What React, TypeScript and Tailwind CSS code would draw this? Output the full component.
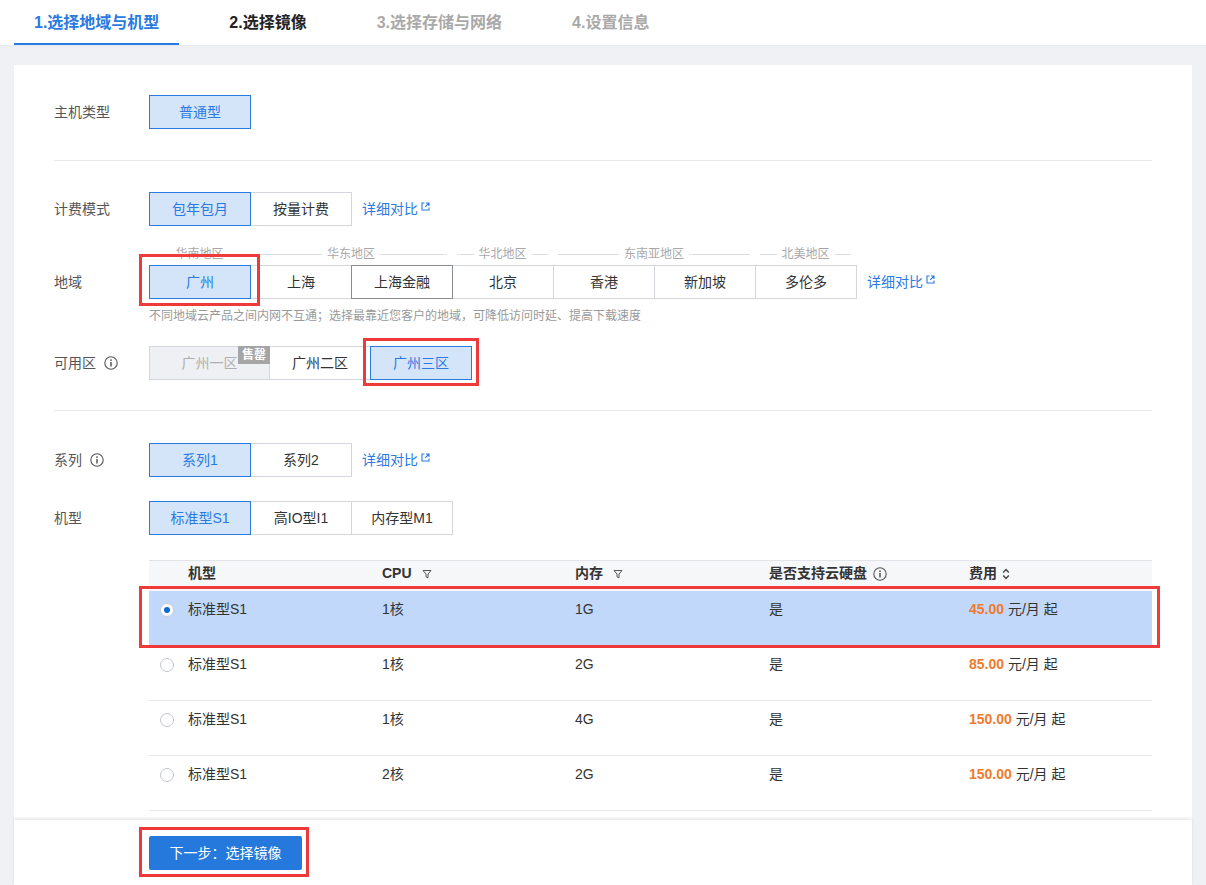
import React from "react";

const BLUE = "#2a7ae2";

function ExtIcon() {
  return (
    <svg width="9" height="9" viewBox="0 0 9 9" className="ml-[3px] -mt-[6px]">
      <path d="M3.5 1H1v7h7V5.5" fill="none" stroke={BLUE} strokeWidth="1.1" />
      <path d="M5 1h3v3M8 1L4.2 4.8" fill="none" stroke={BLUE} strokeWidth="1.1" />
    </svg>
  );
}

function InfoIcon() {
  return (
    <svg width="14" height="14" viewBox="0 0 14 14">
      <circle cx="7" cy="7" r="6.2" fill="none" stroke="#555" strokeWidth="1.1" />
      <circle cx="7" cy="4.1" r="0.95" fill="#555" />
      <path d="M7 6v4.6" stroke="#555" strokeWidth="1.5" />
    </svg>
  );
}

function FilterIcon() {
  return (
    <svg width="10" height="10" viewBox="0 0 10 10" className="ml-[10px]">
      <path d="M1 1.5h8L6 5v3.8L4 7.8V5z" fill="none" stroke="#555" strokeWidth="1" strokeLinejoin="round" />
    </svg>
  );
}

function SortIcon() {
  return (
    <svg width="8" height="12" viewBox="0 0 8 12" className="ml-[5px]">
      <path d="M1.2 4.6L4 1.6L6.8 4.6M1.2 7.4L4 10.4L6.8 7.4" fill="none" stroke="#444" strokeWidth="1.4" />
    </svg>
  );
}

function Link() {
  return (
    <span className="ml-[10px] flex items-center text-[14px] text-[#2a7ae2]">
      详细对比
      <ExtIcon />
    </span>
  );
}

type Opt = { t: string; sel?: boolean; w?: string; hover?: boolean };

function Seg({ opts }: { opts: Opt[] }) {
  return (
    <div className="flex">
      {opts.map((o, i) => (
        <div
          key={i}
          className={
            "relative flex h-[34px] items-center justify-center border text-[14px] " +
            (o.w ? o.w : "w-[102px]") +
            (i > 0 ? " -ml-px" : "") +
            (o.sel
              ? " z-10 border-[#2a7ae2] bg-[#d5e5f9] text-[#2a7ae2]"
              : o.hover
              ? " z-10 border-[#8a8d93] bg-white text-[#333]"
              : " border-[#d3d6dc] bg-white text-[#333]")
          }
        >
          {o.t}
        </div>
      ))}
    </div>
  );
}

function Label({ children }: { children: React.ReactNode }) {
  return (
    <div className="flex h-[34px] w-[95px] shrink-0 items-center gap-[8px] text-[14px] text-[#555]">
      {children}
    </div>
  );
}

function Group({ t, w }: { t: string; w: string }) {
  return (
    <div className={"flex h-[14px] items-center gap-[5px] px-[5px] " + w}>
      <div className="h-px flex-1 bg-[#dcdde0]" />
      <span className="text-[12px] leading-[14px] text-[#a8a8a8]">{t}</span>
      <div className="h-px flex-1 bg-[#dcdde0]" />
    </div>
  );
}

const rows = [
  { cpu: "1核", mem: "1G", price: "45.00", sel: true },
  { cpu: "1核", mem: "2G", price: "85.00" },
  { cpu: "1核", mem: "4G", price: "150.00" },
  { cpu: "2核", mem: "2G", price: "150.00" },
];

const cols = "grid grid-cols-[39px_194px_193px_194px_200px_1fr] items-center";

export default function App() {
  return (
    <div className="flex h-[885px] w-[1206px] flex-col overflow-hidden bg-[#eff1f5] font-['Liberation_Sans','Noto_Sans_CJK_SC',sans-serif] text-[#333]">
      {/* tabs */}
      <div className="flex h-[45px] shrink-0 gap-[30px] bg-white pl-[14px] shadow-[0_1px_2px_rgba(0,0,0,0.04)]">
        <div className="flex h-full items-center border-b-2 border-[#2a7ae2] px-[20px] pt-[2px] text-[16px] font-bold text-[#2a7ae2]">
          1.选择地域与机型
        </div>
        <div className="flex h-full items-center px-[20px] text-[16px] font-bold text-[#222]">2.选择镜像</div>
        <div className="flex h-full items-center px-[20px] text-[16px] font-bold text-[#a9a9a9]">3.选择存储与网络</div>
        <div className="flex h-full items-center px-[20px] text-[16px] font-bold text-[#a9a9a9]">4.设置信息</div>
      </div>

      {/* card */}
      <div className="mx-[14px] mt-[20px] min-h-0 flex-1 overflow-hidden bg-white px-[40px] pt-[30px]">
        <div className="flex">
          <Label>主机类型</Label>
          <Seg opts={[{ t: "普通型", sel: true }]} />
        </div>

        <div className="mt-[31px] h-px bg-[#e6e8ec]" />

        <div className="mt-[31px] flex items-center">
          <Label>计费模式</Label>
          <Seg opts={[{ t: "包年包月", sel: true }, { t: "按量计费" }]} />
          <Link />
        </div>

        <div className="mt-[21px] flex">
          <div className="mt-[18px]">
            <Label>地域</Label>
          </div>
          <div className="flex flex-col">
            <div className="flex">
              <Group t="华南地区" w="w-[101px]" />
              <Group t="华东地区" w="w-[202px]" />
              <Group t="华北地区" w="w-[101px]" />
              <Group t="东南亚地区" w="w-[202px]" />
              <Group t="北美地区" w="w-[101px]" />
            </div>
            <div className="mt-[4px] flex items-center">
              <div className="relative">
                <Seg opts={[{ t: "广州", sel: true }]} />
                <div className="pointer-events-none absolute -top-[11px] -bottom-[7px] -left-[10px] -right-[9px] z-20 border-[3px] border-[#f03a3a]" />
              </div>
              <div className="-ml-px">
                <Seg
                  opts={[
                    { t: "上海" },
                    { t: "上海金融", hover: true },
                    { t: "北京" },
                    { t: "香港" },
                    { t: "新加坡" },
                    { t: "多伦多" },
                  ]}
                />
              </div>
              <Link />
            </div>
            <div className="mt-[10px] text-[12px] leading-[14px] text-[#999]">
              不同地域云产品之间内网不互通；选择最靠近您客户的地域，可降低访问时延、提高下载速度
            </div>
          </div>
        </div>

        <div className="mt-[23px] flex">
          <Label>
            可用区 <InfoIcon />
          </Label>
          <div className="flex">
            <div className="relative flex h-[34px] w-[121px] items-center justify-center border border-[#d3d6dc] bg-[#eef0f3] text-[14px] text-[#b0b0b0]">
              广州一区
              <span className="absolute -right-px -top-px flex h-[18px] w-[32px] items-center justify-center bg-[#a5a5a5] text-[12px] font-bold text-white">
                售罄
              </span>
            </div>
            <div className="-ml-px flex h-[34px] w-[102px] items-center justify-center border border-[#d3d6dc] bg-white text-[14px]">
              广州二区
            </div>
            <div className="relative -ml-px">
              <Seg opts={[{ t: "广州三区", sel: true }]} />
              <div className="pointer-events-none absolute -top-[8px] -bottom-[6px] -left-[7px] -right-[7px] z-20 border-[3px] border-[#f03a3a]" />
            </div>
          </div>
        </div>

        <div className="mt-[30px] h-px bg-[#e6e8ec]" />

        <div className="mt-[32px] flex items-center">
          <Label>
            系列 <InfoIcon />
          </Label>
          <Seg opts={[{ t: "系列1", sel: true }, { t: "系列2" }]} />
          <Link />
        </div>

        <div className="mt-[24px] flex items-center">
          <Label>机型</Label>
          <Seg opts={[{ t: "标准型S1", sel: true }, { t: "高IO型I1" }, { t: "内存型M1" }]} />
        </div>

        {/* table */}
        <div className="ml-[95px] mt-[25px]">
          <div className={cols + " h-[31px] border-t border-[#e1e4e9] bg-[#f6f7f9] text-[14px] font-bold text-[#333]"}>
            <div />
            <div>机型</div>
            <div className="flex items-center">CPU<FilterIcon /></div>
            <div className="flex items-center">内存<FilterIcon /></div>
            <div className="flex items-center gap-[6px]">是否支持云硬盘<InfoIcon /></div>
            <div className="flex items-center">费用<SortIcon /></div>
            <div />
          </div>
          {rows.map((r, i) => (
            <div key={i} className="relative">
              <div
                className={
                  cols +
                  " h-[55px] border-b text-[14px] " +
                  (r.sel ? "border-white bg-[#c1d8fb]" : "border-[#e6e8ed] bg-white")
                }
              >
                <div className="pl-[11px]">
                  {r.sel ? (
                    <div className="flex h-[14px] w-[14px] items-center justify-center rounded-full border border-[#c9ced6] bg-white">
                      <div className="h-[6px] w-[6px] rounded-full bg-[#0b6bd3]" />
                    </div>
                  ) : (
                    <div className="h-[14px] w-[14px] rounded-full border border-[#c3c7cd] bg-white" />
                  )}
                </div>
                <div>标准型S1</div>
                <div>{r.cpu}</div>
                <div>{r.mem}</div>
                <div>是</div>
                <div>
                  <span className="font-bold text-[#ef7b2d]">{r.price}</span> 元/月 起
                </div>
                <div />
              </div>
              {r.sel && (
                <div className="pointer-events-none absolute -top-[5px] -bottom-[2px] -left-[10px] -right-[8px] z-20 border-[3px] border-[#f03a3a]" />
              )}
            </div>
          ))}
        </div>
      </div>

      {/* footer */}
      <div className="relative z-10 mx-[14px] flex h-[65px] shrink-0 bg-white pl-[135px] pt-[16px] shadow-[0_-2px_3px_rgba(0,0,0,0.09)]">
        <div className="relative h-[34px]">
          <div className="flex h-[34px] w-[153px] items-center justify-center rounded-[2px] bg-[#2679dc] text-[14px] text-white">
            下一步：选择镜像
          </div>
          <div className="pointer-events-none absolute -top-[9px] -bottom-[7px] -left-[10px] -right-[7px] border-[3px] border-[#f03a3a]" />
        </div>
      </div>
    </div>
  );
}
